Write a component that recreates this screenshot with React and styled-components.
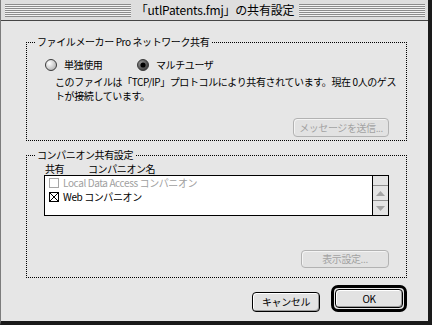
import React from 'react'
import styled, { createGlobalStyle, css } from 'styled-components'

const GlobalStyle = createGlobalStyle`
  html, body {
    margin: 0;
    padding: 0;
    background: #1a1a1a;
  }
  body {
    font-family: "Noto Sans CJK JP", "Noto Sans", sans-serif;
    color: #000;
  }
`

const smallText = css`
  font-size: 10px;
  line-height: 14px;
  letter-spacing: -0.4px;
  white-space: nowrap;
`

const Radio = ({ checked }) => (
  <svg width="12" height="12" viewBox="0 0 12 12">
    <defs>
      <radialGradient id={checked ? 'radOn' : 'radOff'} cx="0.35" cy="0.35" r="0.7">
        <stop offset="0" stopColor={checked ? '#9a9a9a' : '#ffffff'} />
        <stop offset="1" stopColor={checked ? '#3a3a3a' : '#b4b4b4'} />
      </radialGradient>
    </defs>
    <circle cx="6" cy="6" r="5.5" fill={`url(#${checked ? 'radOn' : 'radOff'})`} stroke="#3c3c3c" />
    {checked && <circle cx="6" cy="6" r="2.6" fill="#000" />}
  </svg>
)

const CheckBox = ({ checked, disabled }) => (
  <svg width="10" height="10" viewBox="0 0 10 10">
    <rect x="0.5" y="0.5" width="9" height="9" fill="#fff" stroke={disabled ? '#a6a6a6' : '#000'} />
    {checked && <path d="M1 1 L9 9 M9 1 L1 9" stroke="#000" />}
  </svg>
)

const Arrow = ({ down }) => (
  <svg width="9" height="5" viewBox="0 0 9 5">
    <path d={down ? 'M0 0 L9 0 L4.5 5 Z' : 'M4.5 0 L9 5 L0 5 Z'} fill="#a4a4a4" />
  </svg>
)

export default function App() {
  return (
    <>
      <GlobalStyle />
      <Frame>
        <TitleBar>
          <Stripes />
          <Title>「utlPatents.fmj」の共有設定</Title>
          <Stripes />
        </TitleBar>
        <Content>
          <Group>
            <Legend>ファイルメーカー Pro ネットワーク共有</Legend>
            <NetworkInner>
              <RadioRow>
                <RadioOption><Radio />単独使用</RadioOption>
                <RadioOption><Radio checked />マルチユーザ</RadioOption>
              </RadioRow>
              <Notice>
                このファイルは「TCP/IP」プロトコルにより共有されています。現在 0人のゲス<br />
                トが接続しています。
              </Notice>
              <PushButton $disabled $width={96} $top={15}>メッセージを送信...</PushButton>
            </NetworkInner>
          </Group>
          <Group $gap={8}>
            <Legend>コンパニオン共有設定</Legend>
            <CompanionInner>
              <ListHeader>
                <span>共有</span>
                <span>コンパニオン名</span>
              </ListHeader>
              <ListBox>
                <Rows>
                  <Row $muted>
                    <CheckBox disabled />
                    Local Data Access コンパニオン
                  </Row>
                  <Row>
                    <CheckBox checked />
                    Web コンパニオン
                  </Row>
                </Rows>
                <ScrollBar>
                  <ArrowCell><Arrow /></ArrowCell>
                  <ArrowCell><Arrow down /></ArrowCell>
                </ScrollBar>
              </ListBox>
              <PushButton $disabled $width={88} $height={18} $top={34}>表示設定...</PushButton>
            </CompanionInner>
          </Group>
          <ButtonRow>
            <PushButton $width={68} $height={20}>キャンセル</PushButton>
            <DefaultRing>
              <PushButton $width={68} $height={19}>OK</PushButton>
            </DefaultRing>
          </ButtonRow>
        </Content>
      </Frame>
    </>
  )
}

const Frame = styled.div`
  width: 432px;
  height: 325px;
  box-sizing: border-box;
  border-left: 1px solid #7c7c7c;
  border-right: 4px solid #1a1a1a;
  border-bottom: 4px solid #1a1a1a;
  background: #e6e6e6;
  display: flex;
  flex-direction: column;
`

const TitleBar = styled.div`
  height: 20px;
  display: flex;
  align-items: center;
  gap: 5px;
  padding: 0 3px 0 4px;
  background: #dedede;
  border-bottom: 1px solid #454545;
`

const Stripes = styled.div`
  flex: 1;
  height: 13px;
  background: repeating-linear-gradient(to bottom, #8c8c8c 0 1px, #f2f2f2 1px 2px);
`

const Title = styled.div`
  font-size: 12px;
  line-height: 14px;
  letter-spacing: -0.2px;
  white-space: nowrap;
`

const Content = styled.div`
  flex: 1;
  padding: 15px 21px 0 25px;
  display: flex;
  flex-direction: column;
`

const Group = styled.fieldset`
  margin: ${p => p.$gap || 0}px 0 0 0;
  padding: 0;
  min-width: 0;
  border: 1px dotted #000;
`

const Legend = styled.legend`
  margin-left: 8px;
  padding: 0 2px;
  font-size: 10px;
  line-height: 12px;
  letter-spacing: -0.4px;
  white-space: nowrap;
`

const NetworkInner = styled.div`
  padding: 10px 17px 3px 18px;
  display: flex;
  flex-direction: column;
`

const RadioRow = styled.div`
  display: grid;
  grid-template-columns: 92px auto;
  align-items: center;
  height: 14px;
`

const RadioOption = styled.label`
  ${smallText}
  display: flex;
  align-items: center;
  gap: 7px;
`

const Notice = styled.p`
  ${smallText}
  margin: 3px 0 0 10px;
`

const PushButton = styled.button`
  ${smallText}
  font-family: inherit;
  align-self: flex-end;
  width: ${p => p.$width}px;
  height: ${p => p.$height || 19}px;
  margin-top: ${p => p.$top || 0}px;
  padding: 0;
  box-sizing: border-box;
  border-radius: 4px;
  background: #e2e2e2;
  border: 1px solid ${p => (p.$disabled ? '#b2b2b2' : '#000')};
  color: ${p => (p.$disabled ? '#a2a2a2' : '#000')};
  box-shadow: ${p => (p.$disabled
    ? 'inset 1px 1px 0 #f4f4f4'
    : 'inset 1px 1px 0 #fff, inset -1px -1px 0 #9a9a9a')};
  display: flex;
  align-items: center;
  justify-content: center;
`

const CompanionInner = styled.div`
  padding: 1px 17px 9px 17px;
  display: flex;
  flex-direction: column;
`

const ListHeader = styled.div`
  ${smallText}
  line-height: 13px;
  display: grid;
  grid-template-columns: 43px auto;
  padding-left: 1px;
`

const ListBox = styled.div`
  height: 41px;
  box-sizing: border-box;
  border: 1px solid #000;
  background: #fff;
  display: flex;
`

const Rows = styled.div`
  flex: 1;
  display: flex;
  flex-direction: column;
`

const Row = styled.div`
  ${smallText}
  height: 14px;
  display: flex;
  align-items: center;
  gap: 4px;
  padding-left: 4px;
  color: ${p => (p.$muted ? '#a0a0a0' : '#000')};
`

const ScrollBar = styled.div`
  width: 15px;
  border-left: 1px solid #000;
  background: #e4e4e4;
  display: flex;
  flex-direction: column;
  justify-content: flex-end;
`

const ArrowCell = styled.div`
  height: 15px;
  box-sizing: border-box;
  border-top: 1px solid #909090;
  display: flex;
  align-items: center;
  justify-content: center;
`

const ButtonRow = styled.div`
  margin-top: 7px;
  display: flex;
  justify-content: flex-end;
  align-items: center;
  gap: 11px;
`

const DefaultRing = styled.div`
  display: flex;
  padding: 1px;
  border: 3px solid #000;
  border-radius: 7px;
`
